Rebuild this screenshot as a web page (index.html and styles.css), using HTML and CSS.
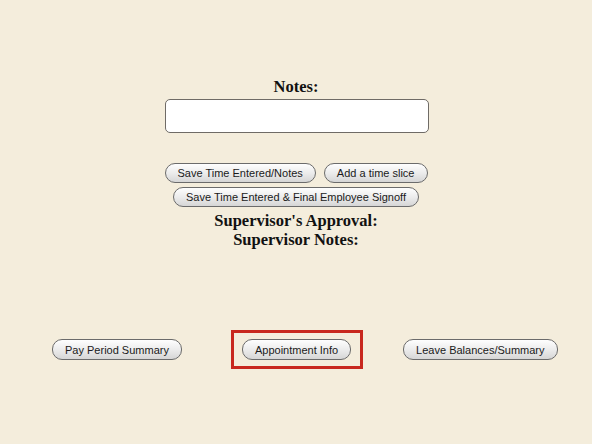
FILE: index.html
```html
<!DOCTYPE html>
<html>
<head>
<meta charset="utf-8">
<link rel="stylesheet" href="styles.css">
</head>
<body>
<div class="panel">
  <div class="label">Notes:</div>
  <textarea class="notes"></textarea>
  <div class="actions">
    <div class="row">
      <button class="btn">Save Time Entered/Notes</button>
      <button class="btn">Add a time slice</button>
    </div>
    <div class="row row2">
      <button class="btn">Save Time Entered &amp; Final Employee Signoff</button>
    </div>
  </div>
  <div class="sup">
    <div class="label">Supervisor's Approval:</div>
    <div class="label">Supervisor Notes:</div>
  </div>
</div>
<div class="nav">
  <button class="btn">Pay Period Summary</button>
  <div class="highlight"><button class="btn">Appointment Info</button></div>
  <button class="btn">Leave Balances/Summary</button>
</div>
</body>
</html>
```

FILE: styles.css
```css
html, body {
  margin: 0;
  padding: 0;
  background: #f4eddc;
}
body {
  width: 592px;
  height: 444px;
  overflow: hidden;
  font-family: "Liberation Serif", "Times New Roman", serif;
  color: #111;
}
.panel {
  padding-top: 77px;
  text-align: center;
}
.label {
  font-weight: bold;
  font-size: 16.5px;
  line-height: 19px;
}
.notes {
  display: block;
  box-sizing: border-box;
  width: 264px;
  height: 34px;
  margin: 3px auto 0 165px;
  border: 1px solid #6f6b66;
  border-radius: 5px;
  background: #fff;
  resize: none;
  padding: 0;
}
.actions {
  margin-top: 30px;
}
.row {
  display: flex;
  justify-content: center;
  gap: 8px;
}
.row2 {
  margin-top: 4px;
}
.btn {
  box-sizing: border-box;
  height: 20px;
  padding: 0 12px;
  border: 1px solid #6b6b6b;
  border-radius: 10px;
  background: linear-gradient(#fefefe, #ececec 50%, #d6d6d6);
  font-family: "Liberation Sans", Arial, sans-serif;
  font-size: 11px;
  color: #1a1a1a;
  line-height: 18px;
  margin: 0;
}
.sup {
  margin-top: 4px;
}
.nav {
  display: flex;
  align-items: center;
  margin-top: 81px;
  padding-left: 52px;
}
.nav .btn {
  height: 21px;
  padding: 0 12px;
}
.highlight {
  margin-left: 49px;
  margin-right: 40px;
  border: 3px solid #c8281e;
  padding: 6px 9px 6px 8px;
  display: flex;
}
```
